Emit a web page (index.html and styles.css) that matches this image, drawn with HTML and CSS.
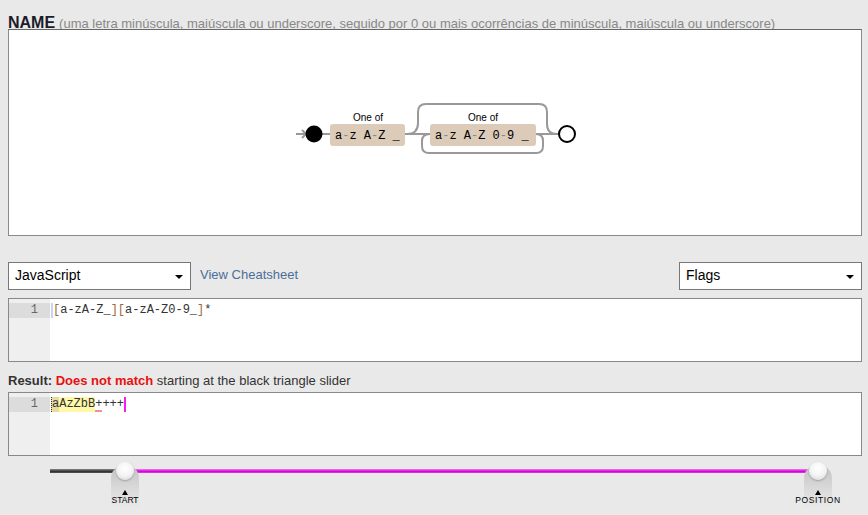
FILE: index.html
```html
<!DOCTYPE html>
<html>
<head>
<meta charset="utf-8">
<link rel="stylesheet" href="styles.css">
</head>
<body>
<div class="page">
  <h1 class="title"><span class="name">NAME</span><span class="desc">(uma letra minúscula, maiúscula ou underscore, seguido por 0 ou mais ocorrências de minúscula, maiúscula ou underscore)</span></h1>

  <div class="diagram">
    <svg width="852" height="205" viewBox="0 0 852 205">
      <g transform="translate(-9,-30)" fill="none" stroke="#999" stroke-width="2">
        <path d="M296 134 H306 M302 130 L306 134 L302 138"/>
        <path d="M322 134 H330"/>
        <path d="M405 134 H430"/>
        <path d="M536 134 H559"/>
        <path d="M407 134 Q418 134 418 123 V112 Q418 104 426 104 H539 Q547 104 547 112 V124 Q547 134 557 134"/>
        <path d="M536 134 Q543 134 543 141 V146 Q543 153 536 153 H429 Q422 153 422 146 V141 Q422 134 430 134"/>
      </g>
      <g transform="translate(-9,-30)">
        <circle cx="314" cy="134" r="8.5" fill="#000"/>
        <circle cx="567" cy="134" r="8" fill="#fff" stroke="#000" stroke-width="2"/>
        <rect x="330" y="124" width="75" height="22" rx="3" fill="#dccbb9"/>
        <rect x="430" y="124" width="106" height="22" rx="3" fill="#dccbb9"/>
        <text class="oneof" x="368" y="121" text-anchor="middle">One of</text>
        <text class="oneof" x="483" y="121" text-anchor="middle">One of</text>
        <text class="chars" x="335" y="139">a<tspan class="dash">-</tspan>z A<tspan class="dash">-</tspan>Z _</text>
        <text class="chars" x="435" y="139">a<tspan class="dash">-</tspan>z A<tspan class="dash">-</tspan>Z 0<tspan class="dash">-</tspan>9 _</text>
      </g>
    </svg>
  </div>

  <div class="toolbar">
    <div class="select"><span>JavaScript</span><i class="caret"></i></div>
    <a class="cheat">View Cheatsheet</a>
    <div class="select flags"><span>Flags</span><i class="caret"></i></div>
  </div>

  <div class="editor">
    <div class="gutter"><div class="lineno">1</div></div>
    <div class="code"><div class="line"><span class="cursor-blue"></span><span class="br">[</span>a-zA-Z_<span class="br">]</span><span class="br">[</span>a-zA-Z0-9_<span class="br">]</span>*</div></div>
  </div>

  <div class="result"><b>Result:</b> <b class="bad">Does not match</b> starting at the black triangle slider</div>

  <div class="editor">
    <div class="gutter"><div class="lineno">1</div></div>
    <div class="code"><div class="line"><span class="hl first">a</span><span class="hl">AzZbB</span><span class="err">+</span>+++<span class="cursor-mag"></span></div></div>
  </div>

  <div class="slider">
    <div class="track-left" style="width:9.77%"></div>
    <div class="track-right" style="left:9.77%"></div>
    <div class="knob" style="left:9.77%">
      <div class="shade"></div>
      <div class="ball"></div>
      <div class="label"><i class="tri"></i><span>START</span></div>
    </div>
    <div class="knob" style="left:100%">
      <div class="shade"></div>
      <div class="ball"></div>
      <div class="label wide"><i class="tri"></i><span>POSITION</span></div>
    </div>
  </div>
</div>
</body>
</html>
```

FILE: styles.css
```css
html, body {
  margin: 0;
  padding: 0;
  background: #e9e9e9;
  font-family: "Liberation Sans", Arial, sans-serif;
  overflow: hidden;
}

.page {
  padding: 0 6px 0 8px;
  display: flex;
  flex-direction: column;
  height: 515px;
}

.title {
  margin: 0;
  height: 29px;
  box-sizing: border-box;
  padding-top: 7px;
  line-height: 20px;
  font-weight: normal;
  white-space: nowrap;
}

.name {
  font-size: 16px;
  font-weight: bold;
  color: #1b1b2a;
}

.desc {
  margin-left: 4px;
  font-size: 13px;
  color: #888;
}

.diagram {
  height: 207px;
  box-sizing: border-box;
  background: #fff;
  border: 1px solid #8a8a8a;
  border-top-color: #666;
}

.diagram svg {
  display: block;
}

.oneof {
  font-family: "Liberation Sans", Arial, sans-serif;
  font-size: 10px;
  fill: #000;
}

.chars {
  font-family: "Liberation Mono", "Courier New", monospace;
  font-size: 12px;
  fill: #000;
}

.dash {
  fill: #888;
}

.toolbar {
  margin-top: 26px;
  display: flex;
  align-items: center;
  height: 28px;
}

.select {
  width: 183px;
  height: 28px;
  box-sizing: border-box;
  background: #fff;
  border: 1px solid #777;
  display: flex;
  align-items: center;
  padding: 0 6px 3px 6px;
  font-size: 14px;
  color: #000;
}

.select span {
  flex: 1;
}

.caret {
  width: 0;
  height: 0;
  border-left: 4px solid transparent;
  border-right: 4px solid transparent;
  border-top: 4px solid #000;
  margin-top: 5px;
  margin-right: 1px;
}

.cheat {
  margin-left: 9px;
  margin-bottom: 3px;
  font-size: 13px;
  color: #4a6e9b;
}

.flags {
  margin-left: auto;
}

.editor {
  margin-top: 8px;
  height: 64px;
  box-sizing: border-box;
  background: #fff;
  border: 1px solid #888;
  display: flex;
}

.result + .editor {
  margin-top: 0;
}

.gutter {
  width: 41px;
  background: #efefef;
  padding-top: 4px;
}

.lineno {
  height: 15px;
  line-height: 15px;
  background: #dcdcdc;
  text-align: right;
  padding-right: 12px;
  font-family: "Liberation Mono", "Courier New", monospace;
  font-size: 12px;
  color: #666;
}

.code {
  flex: 1;
  padding-top: 4px;
  padding-left: 2px;
}

.line {
  height: 15px;
  line-height: 15px;
  font-family: "Liberation Mono", "Courier New", monospace;
  font-size: 12px;
  color: #333;
  white-space: pre;
  display: flex;
  align-items: stretch;
}

.br {
  color: #9a6a3a;
}

.cursor-blue {
  width: 2px;
  background: #ccd3f0;
  margin-left: -1px;
}

.hl {
  background: #fff8a8;
}

.hl.first {
  background: #e6dca2;
  border-left: 1px dotted #333;
  margin-left: -1px;
}

.err {
  box-shadow: inset 0 -2px 0 #f09090;
}

.cursor-mag {
  width: 2px;
  background: #f020f0;
}

.result {
  height: 30px;
  box-sizing: border-box;
  padding-top: 11px;
  line-height: 16px;
  font-size: 13px;
  color: #333;
}

.bad {
  color: #e81010;
}

.slider {
  position: relative;
  margin: 13px 44px 0 42px;
  height: 4px;
}

.track-left {
  position: absolute;
  left: 0;
  top: 0;
  height: 4px;
  background: linear-gradient(#888, #333 60%, #555);
}

.track-right {
  position: absolute;
  right: 0;
  top: 0;
  height: 4px;
  background: linear-gradient(#f080f0, #d800d8 60%, #e040e0);
}

.knob {
  position: absolute;
  top: 0;
  width: 0;
}

.shade {
  position: absolute;
  left: -14px;
  top: -3px;
  width: 28px;
  height: 42px;
  border-radius: 12px 12px 0 0;
  background: linear-gradient(#c4c4c4, #d8d8d8 50%, #e3e3e3 80%, rgba(233,233,233,0));
}

.ball {
  position: absolute;
  left: -9px;
  top: -7px;
  width: 18px;
  height: 18px;
  border-radius: 50%;
  background: radial-gradient(circle at 50% 35%, #ffffff 0%, #f4f4f4 50%, #cfcfcf 100%);
  box-shadow: 0 1px 2px rgba(0,0,0,0.25);
}

.label {
  position: absolute;
  top: 21px;
  left: -30px;
  width: 60px;
  display: flex;
  flex-direction: column;
  align-items: center;
  font-size: 8.5px;
  line-height: 9px;
  color: #000;
}

.label.wide span {
  letter-spacing: 0.6px;
}

.tri {
  width: 0;
  height: 0;
  border-left: 3.5px solid transparent;
  border-right: 3.5px solid transparent;
  border-bottom: 5px solid #000;
  margin-bottom: 1px;
}
```
